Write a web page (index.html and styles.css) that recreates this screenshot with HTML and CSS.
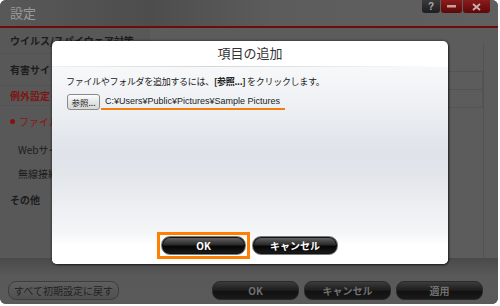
FILE: index.html
```html
<!DOCTYPE html>
<html lang="ja">
<head>
    <meta charset="UTF-8">
    <meta name="viewport" content="width=device-width, initial-scale=1.0">
    <title>設定 - 項目の追加</title>
    <link rel="stylesheet" href="styles.css">
</head>
<body>
    <div class="window">
        <div class="titlebar">
            <span class="app-title">設定</span>
            <div class="win-buttons">
                <span class="wbtn help">?</span>
                <span class="wbtn red min">
                    <svg width="9" height="3" viewBox="0 0 9 3"><rect x="0" y="0" width="9" height="2.5" fill="#c9a0a0"/></svg>
                </span>
                <span class="wbtn red close">
                    <svg width="9" height="8" viewBox="0 0 9 8"><path d="M1 1 L8 7 M8 1 L1 7" stroke="#d0b0b0" stroke-width="1.8"/></svg>
                </span>
            </div>
        </div>

        <div class="main">
            <ul class="sidebar">
                <li class="nav r1 bold">ウイルス/スパイウェア対策</li>
                <li class="nav r2 bold">有害サイト対策</li>
                <li class="nav r3 bold active">例外設定</li>
                <li class="nav r4 sub current"><span class="dot"></span>ファイル/フォルダ</li>
                <li class="nav r5 sub">Webサイト</li>
                <li class="nav r6 sub">無線接続</li>
                <li class="nav r7 bold">その他</li>
            </ul>
            <div class="pane">
                <div class="pane-box">
                    <div class="grid-row"></div>
                    <div class="grid-row"></div>
                </div>
            </div>
        </div>

        <div class="footer">
            <button class="fbtn reset">すべて初期設定に戻す</button>
            <div class="footer-right">
                <button class="fbtn dark">OK</button>
                <button class="fbtn dark">キャンセル</button>
                <button class="fbtn dark">適用</button>
            </div>
        </div>
    </div>

    <div class="dialog">
        <div class="dialog-head">項目の追加</div>
        <div class="dialog-body">
            <p class="hint">ファイルやフォルダを追加するには、<b>[参照...]</b> をクリックします。</p>
            <div class="path-row">
                <button class="browse">参照...</button>
                <span class="path">C:¥Users¥Public¥Pictures¥Sample Pictures</span>
            </div>
        </div>
        <div class="dialog-foot">
            <div class="focus-ring">
                <button class="pill">OK</button>
            </div>
            <button class="pill">キャンセル</button>
        </div>
    </div>
</body>
</html>
```

FILE: styles.css
```css
body {
    margin: 0;
    background: #fff;
    font-family: "Noto Sans CJK JP", "Liberation Sans", sans-serif;
}
.window {
    width: 498px;
    height: 304px;
    background: #5c5c5c;
    border-radius: 6px;
    display: flex;
    flex-direction: column;
    overflow: hidden;
}
.titlebar {
    height: 26px;
    display: flex;
    align-items: flex-start;
    border-bottom: 2px solid #6d0c0c;
    background: linear-gradient(to right, #585858, #4d4d4d 30%, #5c5c5c 55%, #606060);
}
.app-title {
    margin: 4px 0 0 10px;
    font-size: 13px;
    line-height: 18px;
    color: #9a9a9a;
}
.win-buttons {
    margin: 0 8px 0 auto;
    display: flex;
}
.wbtn {
    height: 13px;
    display: flex;
    align-items: center;
    justify-content: center;
    border-radius: 0 0 3px 3px;
}
.help {
    width: 18px;
    background: linear-gradient(#3a3a3a, #1e1e1e);
    color: #aaa;
    font: bold 10px "Liberation Sans", sans-serif;
}
.red {
    background: linear-gradient(#8a1c1c, #5e0707);
}
.min {
    width: 21px;
    margin-left: 1px;
}
.close {
    width: 27px;
    margin-left: 1px;
}

.main {
    height: 230px;
    display: flex;
}
.sidebar {
    width: 150px;
    margin: 0;
    padding: 0;
    list-style: none;
    background: #585858;
}
.nav {
    display: flex;
    align-items: center;
    padding-left: 10px;
    font-size: 10px;
    color: #1c1c1c;
    border-bottom: 1px solid #535353;
}
.bold {
    font-weight: bold;
}
.r1 { height: 25px; }
.r2 { height: 31px; }
.r3 { height: 19px; color: #7e1414; }
.r4 { height: 30px; }
.r5 { height: 24px; }
.r6 { height: 23px; border-bottom: 1px solid #4a4a4a; }
.r7 { height: 26px; border-bottom: none; }
.sub {
    padding-left: 18px;
    border-bottom-color: #585858;
}
.current {
    color: #8a1616;
    padding-left: 10px;
}
.dot {
    width: 5px;
    height: 5px;
    border-radius: 50%;
    background: #8a1010;
    margin-right: 4px;
}
.pane {
    flex: 1;
    padding: 15px 14px 0 6px;
}
.pane-box {
    height: 210px;
    border: 1px solid #525252;
    border-top: none;
    padding-top: 28px;
}
.grid-row {
    height: 17px;
    border: 1px solid #535353;
    margin-left: 290px;
}
.grid-row + .grid-row {
    border-top: none;
}

.footer {
    flex: 1;
    display: flex;
    align-items: flex-start;
    padding: 23px 15px 0 8px;
    background: linear-gradient(#4a4a4a, #595959 40%, #5a5a5a);
}
.footer-right {
    margin-left: auto;
    display: flex;
    gap: 5px;
}
.fbtn {
    height: 19px;
    border-radius: 8px;
    font-family: "Noto Sans CJK JP", sans-serif;
    font-size: 10px;
    font-weight: bold;
    padding: 0;
}
.reset {
    width: 111px;
    background: linear-gradient(#5e5e5e, #505050);
    border: 1px solid #3e3e3e;
    color: #222;
    font-weight: normal;
}
.dark {
    width: 87px;
    background: linear-gradient(#3c3c3c, #1c1c1c 50%, #111 55%, #1a1a1a);
    border: 1px solid #2a2a2a;
    color: #707070;
}

.dialog {
    position: absolute;
    left: 52px;
    top: 41px;
    width: 396px;
    height: 223px;
    border-radius: 5px;
    background: #fff;
    box-shadow: 0 0 3px rgba(0, 0, 0, 0.6), 1px 1px 2px rgba(0, 0, 0, 0.5);
    display: flex;
    flex-direction: column;
    overflow: hidden;
}
.dialog-head {
    height: 25px;
    text-align: center;
    font-size: 13px;
    line-height: 24px;
    color: #333;
    border-bottom: 1px solid;
    border-image: linear-gradient(to right, #f0f0f0, #d6d6d6 40%, #e4e4e4 65%, rgba(255, 255, 255, 0)) 1;
}
.dialog-body {
    flex: 1;
    padding: 8px 14px 0;
    background: linear-gradient(#f7f8fa, #edf0f3 25%, #dfe3ea 50%, #e2e5ea 65%, #edeff2 85%, #f4f5f7);
}
.hint {
    margin: 0;
    font-size: 9px;
    line-height: 14px;
    color: #222;
    letter-spacing: -0.3px;
}
.path-row {
    display: flex;
    align-items: center;
    margin-top: 5px;
}
.browse {
    width: 33px;
    height: 16px;
    padding: 0;
    margin-left: 1px;
    border: 1px solid #8a8a8a;
    border-radius: 3px;
    background: linear-gradient(#fdfdfd, #e6e6e6 50%, #d8d8d8);
    font-family: "Noto Sans CJK JP", sans-serif;
    font-size: 8.5px;
    color: #222;
}
.path {
    margin-left: 1px;
    padding: 0 4px 0;
    width: 176px;
    white-space: nowrap;
    font: 9px/14px "Liberation Sans", sans-serif;
    color: #222;
    border-bottom: 2px solid #f57c0e;
}
.dialog-foot {
    height: 32px;
    display: flex;
    align-items: flex-start;
    gap: 2px;
    padding-left: 105px;
    background: linear-gradient(#f4f5f7, #fff 40%);
}
.focus-ring {
    border: 3px solid #ff7f00;
    padding: 1px;
}
.pill {
    display: block;
    width: 85px;
    height: 19px;
    padding: 0;
    border-radius: 9px;
    border: 1px solid #7a7a7a;
    box-shadow: inset 0 0 0 1px #111;
    background: linear-gradient(#6a6a6a, #2a2a2a 45%, #060606 55%, #1c1c1c);
    color: #fff;
    font-family: "Noto Sans CJK JP", sans-serif;
    font-size: 10px;
    font-weight: bold;
}
.focus-ring + .pill {
    width: 86px;
    margin-top: 4px;
}
```
